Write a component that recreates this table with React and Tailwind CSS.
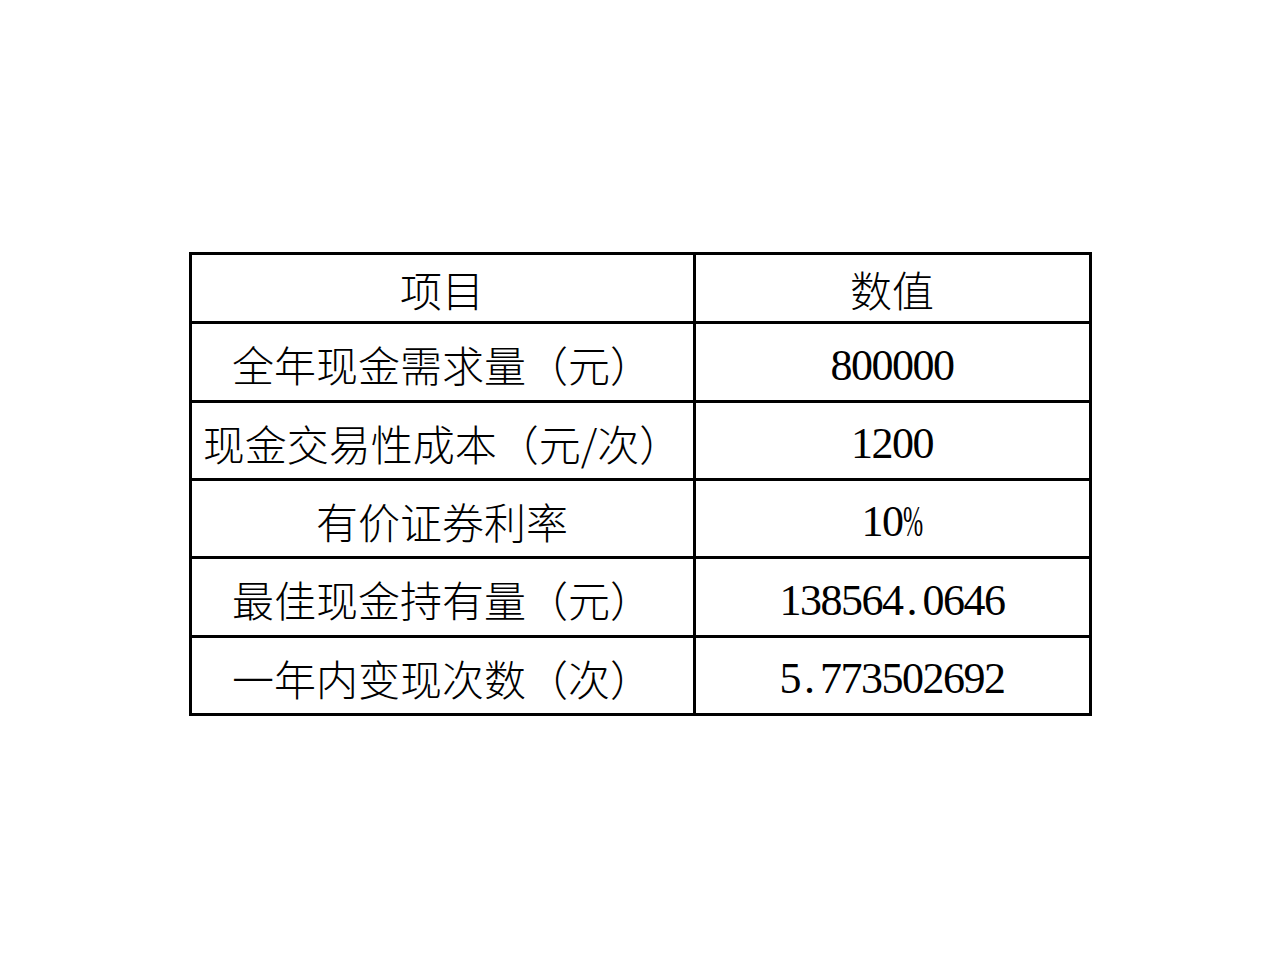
import React from 'react';

const rows = [
  { label: '全年现金需求量（元）', value: '800000', h: 'h-[79px]' },
  { label: '现金交易性成本（元/次）', value: '1200', h: 'h-[78px]' },
  { label: '有价证券利率', value: '10%', h: 'h-[78px]' },
  { label: '最佳现金持有量（元）', value: '138564.0646', h: 'h-[79px]' },
  { label: '一年内变现次数（次）', value: '5.773502692', h: 'h-[78px]' },
];

const cjk = { fontFamily: '"Noto Sans CJK SC", "Noto Sans", sans-serif' };
const num = { fontFamily: '"Liberation Serif", "Times New Roman", Tinos, "DejaVu Serif", serif' };

// SimSun-style half-width "." and "%"
function Num({ text }) {
  return (
    <span style={num} className="tracking-[-1.5px]">
      {text.split('').map((ch, i) => {
        if (ch === '.') return <span key={i} className="inline-block w-[20px] pl-[4px] text-left">.</span>;
        if (ch === '%') return <span key={i} className="inline-block w-[20px] origin-left scale-x-55">%</span>;
        return ch;
      })}
    </span>
  );
}

export default function App() {
  return (
    <div className="h-[967px] w-full bg-white flex items-center justify-center">
      <table className="w-[903px] border-collapse border-[3px] border-black text-black text-[42px] leading-none">
        <tbody>
          <tr className="h-[69px]">
            <td className="w-[504px] border-[3px] border-black text-center pt-[3px] font-light" style={cjk}>项目</td>
            <td className="border-[3px] border-black text-center pt-[3px] font-light" style={cjk}>数值</td>
          </tr>
          {rows.map((r) => (
            <tr key={r.label} className={r.h}>
              <td className="border-[3px] border-black text-center pt-[5px] font-light whitespace-nowrap" style={cjk}>{r.label}</td>
              <td className="border-[3px] border-black text-center pt-[5px] text-[44px]">
                <Num text={r.value} />
              </td>
            </tr>
          ))}
        </tbody>
      </table>
    </div>
  );
}
